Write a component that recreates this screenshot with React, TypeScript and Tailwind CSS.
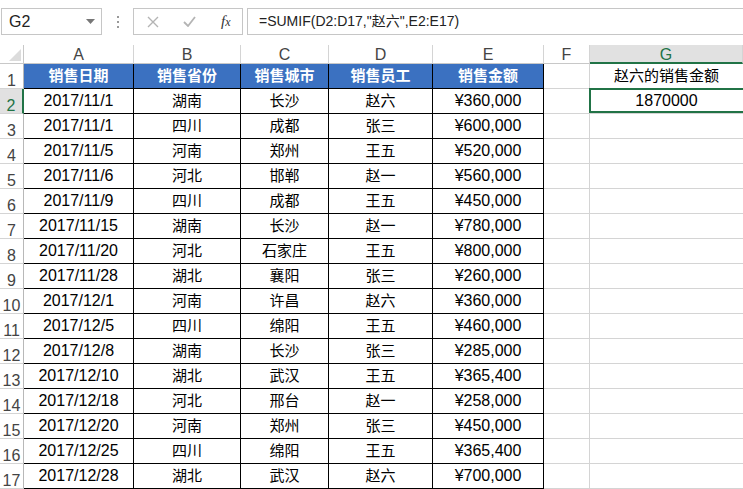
import React from 'react'

const COLS = ['w-[110px]', 'w-[107px]', 'w-[88px]', 'w-[104px]', 'w-[111px]', 'w-[46px]', 'w-[153px]']
const LETTERS = ['A', 'B', 'C', 'D', 'E', 'F', 'G']

const HEAD = ['销售日期', '销售省份', '销售城市', '销售员工', '销售金额']

const ROWS: string[][] = [
  ['2017/11/1', '湖南', '长沙', '赵六', '¥360,000'],
  ['2017/11/1', '四川', '成都', '张三', '¥600,000'],
  ['2017/11/5', '河南', '郑州', '王五', '¥520,000'],
  ['2017/11/6', '河北', '邯郸', '赵一', '¥560,000'],
  ['2017/11/9', '四川', '成都', '王五', '¥450,000'],
  ['2017/11/15', '湖南', '长沙', '赵一', '¥780,000'],
  ['2017/11/20', '河北', '石家庄', '王五', '¥800,000'],
  ['2017/11/28', '湖北', '襄阳', '张三', '¥260,000'],
  ['2017/12/1', '河南', '许昌', '赵六', '¥360,000'],
  ['2017/12/5', '四川', '绵阳', '王五', '¥460,000'],
  ['2017/12/8', '湖南', '长沙', '张三', '¥285,000'],
  ['2017/12/10', '湖北', '武汉', '王五', '¥365,400'],
  ['2017/12/18', '河北', '邢台', '赵一', '¥258,000'],
  ['2017/12/20', '河南', '郑州', '张三', '¥450,000'],
  ['2017/12/25', '四川', '绵阳', '王五', '¥365,400'],
  ['2017/12/28', '湖北', '武汉', '赵六', '¥700,000'],
]

function RowHead({ n, active }: { n: number; active?: boolean }) {
  return (
    <div
      className={
        'w-[24px] h-[25px] shrink-0 flex justify-center pt-[9px] leading-none text-[16px] border-b border-[#d4d4d4] ' +
        (active
          ? 'bg-[#e1e1e1] text-[#217346] border-r-2 border-r-[#217346]'
          : 'bg-white text-[#444] border-r border-r-[#b8b8b8]')
      }
    >
      {n}
    </div>
  )
}

export default function App() {
  return (
    <div
      className="w-[743px] h-[489px] overflow-hidden bg-white text-black"
      style={{ fontFamily: '"Liberation Sans", "Noto Sans CJK SC", sans-serif' }}
    >
      {/* ── 编辑栏 ── */}
      <div className="h-[45px] flex items-start pt-[8px]">
        <div className="ml-[1px] w-[101px] h-[27px] border border-[#c6c6c6] flex items-center justify-between pl-[7px] pr-[6px] text-[16px] text-[#222]">
          <span>G2</span>
          <svg width="9" height="5" viewBox="0 0 9 5">
            <path d="M0 0h9L4.5 5z" fill="#777" />
          </svg>
        </div>
        <div className="w-[31px] h-[27px] flex flex-col items-center justify-center gap-[3px]">
          <span className="w-[2px] h-[2px] bg-[#999]" />
          <span className="w-[2px] h-[2px] bg-[#999]" />
          <span className="w-[2px] h-[2px] bg-[#999]" />
        </div>
        <div className="w-[110px] h-[27px] border border-[#c6c6c6] flex items-center">
          <svg className="ml-[13px]" width="12" height="12" viewBox="0 0 12 12">
            <path d="M1 1l10 10M11 1L1 11" stroke="#b4b4b4" strokeWidth="1.4" />
          </svg>
          <svg className="ml-[24px]" width="13" height="11" viewBox="0 0 13 11">
            <path d="M1 6l4 4 7-9" stroke="#b4b4b4" strokeWidth="1.8" fill="none" />
          </svg>
          <span
            className="ml-[25px] italic text-[15px] text-[#333]"
            style={{ fontFamily: '"Liberation Serif", serif' }}
          >
            f<span className="text-[12px]">x</span>
          </span>
        </div>
        <div className="ml-[4px] flex-1 -mr-[4px] h-[27px] border border-[#c6c6c6] flex items-center pl-[11px] text-[14px] text-[#222]">
          =SUMIF(D2:D17,"赵六",E2:E17)
        </div>
      </div>

      {/* ── 列标题 ── */}
      <div className="flex h-[19px]">
        <div className="w-[24px] shrink-0 relative border-r border-b border-[#c8c8c8] bg-white">
          <svg className="absolute right-[2px] bottom-[2px]" width="12" height="12" viewBox="0 0 12 12">
            <path d="M12 0v12H0z" fill="#dcdcdc" />
          </svg>
        </div>
        {LETTERS.map((l, i) => (
          <div
            key={l}
            className={
              COLS[i] +
              ' shrink-0 flex items-center justify-center text-[16px] leading-none pt-[2px] border-r border-[#d4d4d4] ' +
              (l === 'G'
                ? 'bg-[#e1e1e1] text-[#217346] border-b-2 border-b-[#217346]'
                : 'bg-white text-[#444] border-b border-b-[#c8c8c8]')
            }
          >
            {l}
          </div>
        ))}
      </div>

      {/* ── 第1行 表头 ── */}
      <div className="flex">
        <RowHead n={1} />
        {HEAD.map((h, i) => (
          <div
            key={h}
            className={
              COLS[i] +
              ' h-[25px] shrink-0 flex items-center justify-center bg-[#3b71c1] text-white font-bold text-[15px] border-r border-b border-black'
            }
          >
            {h}
          </div>
        ))}
        <div className="w-[46px] h-[25px] shrink-0 border-r border-b border-[#d4d4d4]" />
        <div className="w-[153px] h-[25px] shrink-0 flex items-center justify-center text-[15px] border-b border-[#d4d4d4]">
          赵六的销售金额
        </div>
      </div>

      {/* ── 数据行 ── */}
      {ROWS.map((r, ri) => (
        <div key={ri} className="flex">
          <RowHead n={ri + 2} active={ri === 0} />
          {r.map((v, i) => (
            <div
              key={i}
              className={
                COLS[i] +
                ' h-[25px] shrink-0 flex items-center justify-center border-r border-b border-black ' +
                (i === 0 || i === 4 ? 'text-[16px]' : 'text-[15px]')
              }
            >
              {v}
            </div>
          ))}
          <div className="w-[46px] h-[25px] shrink-0 border-r border-b border-[#d4d4d4]" />
          <div className="w-[153px] h-[25px] shrink-0 relative flex items-center justify-center text-[16px] border-b border-[#d4d4d4]">
            {ri === 0 && (
              <>
                <span>1870000</span>
                <div className="absolute -left-[1px] -top-[1px] -right-[4px] -bottom-[0px] border-2 border-[#217346]" />
              </>
            )}
          </div>
        </div>
      ))}
    </div>
  )
}
